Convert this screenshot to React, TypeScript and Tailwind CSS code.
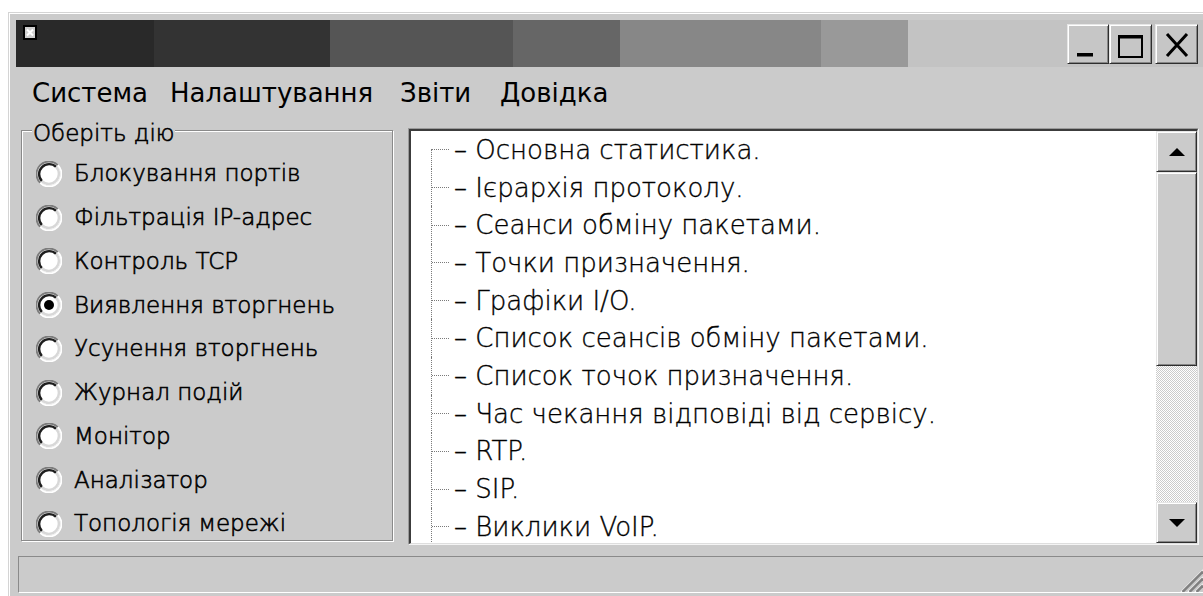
import React from 'react';

const ui = "font-['DejaVu_Sans',sans-serif] text-black";

const raised =
  'border border-t-[#e6e6e6] border-l-[#e6e6e6] border-r-[#2e2e2e] border-b-[#2e2e2e] shadow-[inset_1px_1px_0_#ffffff,inset_-1px_-1px_0_#868686]';

// thin face with a light outline, a bit heavier than the bare ExtraLight
const thinText = 'font-extralight [-webkit-text-stroke:0.6px_#000]';

const actions = [
  'Блокування портів',
  'Фільтрація IP-адрес',
  'Контроль TCP',
  'Виявлення вторгнень',
  'Усунення вторгнень',
  'Журнал подій',
  'Монітор',
  'Аналізатор',
  'Топологія мережі',
];

const reports = [
  'Основна статистика.',
  'Ієрархія протоколу.',
  'Сеанси обміну пакетами.',
  'Точки призначення.',
  'Графіки I/O.',
  'Список сеансів обміну пакетами.',
  'Список точок призначення.',
  'Час чекання відповіді від сервісу.',
  'RTP.',
  'SIP.',
  'Виклики VoIP.',
];

const WindowIcon = () => (
  <svg width="14" height="15" viewBox="0 0 14 15">
    <rect x="0" y="0" width="14" height="15" fill="#000" />
    <rect x="2" y="2" width="10" height="11" fill="#cfcfcf" />
    <path d="M4 4.5L10 10.5M10 4.5L4 10.5" stroke="#fff" strokeWidth="2" />
  </svg>
);

const CaptionButton = ({ kind, className = '' }: { kind: 'min' | 'max' | 'close'; className?: string }) => (
  <div className={`h-[40px] bg-[#c6c6c6] flex items-center justify-center ${raised} ${className}`}>
    <svg width="40" height="38" viewBox="0 0 40 38">
      {kind === 'min' && <rect x="9" y="28" width="16" height="3.5" fill="#000" />}
      {kind === 'max' && (
        <>
          <rect x="8" y="11" width="23" height="21" fill="none" stroke="#000" strokeWidth="2" />
          <rect x="7" y="10" width="25" height="3.5" fill="#000" />
        </>
      )}
      {kind === 'close' && <path d="M10 9L30 31M30 9L10 31" stroke="#000" strokeWidth="3" />}
    </svg>
  </div>
);

const Radio = ({ checked }: { checked?: boolean }) => (
  <svg width="26" height="26" viewBox="0 0 26 26" className="shrink-0">
    <circle cx="13" cy="13" r="11.5" fill="#fff" />
    <path d="M4.16 21.84A12.5 12.5 0 0 1 21.84 4.16" stroke="#7c7c7c" strokeWidth="1.8" fill="none" />
    <path d="M21.84 4.16A12.5 12.5 0 0 1 4.16 21.84" stroke="#ffffff" strokeWidth="1.8" fill="none" />
    <path d="M5.93 20.07A10 10 0 0 1 20.07 5.93" stroke="#1e1e1e" strokeWidth="2.4" fill="none" />
    <path d="M20.07 5.93A10 10 0 0 1 5.93 20.07" stroke="#d8d8d8" strokeWidth="2.4" fill="none" />
    {checked && <circle cx="13" cy="13" r="5" fill="#000" />}
  </svg>
);

const Arrow = ({ dir }: { dir: 'up' | 'down' }) => (
  <svg width="18" height="10" viewBox="0 0 18 10">
    <path d={dir === 'up' ? 'M1 9L9 1L17 9Z' : 'M1 1L9 9L17 1Z'} fill="#000" />
  </svg>
);

const SizeGrip = () => (
  <svg width="26" height="26" viewBox="0 0 26 26">
    {[0, 7, 14].map((o) => (
      <g key={o}>
        <path d={`M${4 + o} 26L26 ${4 + o}`} stroke="#ffffff" strokeWidth="1.5" />
        <path d={`M${5.5 + o} 26L26 ${5.5 + o}`} stroke="#808080" strokeWidth="2.5" />
      </g>
    ))}
  </svg>
);

export default function App() {
  return (
    <div className={`w-[1203px] h-[596px] bg-white overflow-hidden pt-[12px] pl-[8px] ${ui}`}>
      <div className="w-[1195px] h-[584px] border-t border-l border-[#d4d4d4]">
        <div className="h-full border-t border-l border-white bg-[#cbcbcb] flex flex-col">
          {/* caption */}
          <div className="flex h-[47px] ml-[6px] mt-[6px]">
            <div className="w-[138px] bg-[#292929] pt-[5px] pl-[7px]">
              <WindowIcon />
            </div>
            <div className="w-[176px] bg-[#333333]" />
            <div className="w-[183px] bg-[#555555]" />
            <div className="w-[107px] bg-[#666666]" />
            <div className="w-[201px] bg-[#878787]" />
            <div className="w-[87px] bg-[#999999]" />
            <div className="flex-1 bg-[#c3c3c3] flex items-center justify-end pr-[5px]">
              <CaptionButton kind="min" className="w-[42px]" />
              <CaptionButton kind="max" className="w-[43px]" />
              <CaptionButton kind="close" className="w-[43px] ml-[3px]" />
            </div>
          </div>

          {/* menu */}
          <div className="h-[58px] flex items-start pt-[11px] pl-[22px] text-[26px] leading-[30px]">
            <span className="w-[138px]">Система</span>
            <span className="w-[230px]">Налаштування</span>
            <span className="w-[100px]">Звіти</span>
            <span>Довідка</span>
          </div>

          {/* body */}
          <div className="h-[423px] flex items-start pl-[11px]">
            <div className="relative mt-[5px] w-[372px] h-[411px] border border-[#8a8a8a] shadow-[inset_1px_1px_0_#ffffff,1px_1px_0_#ffffff]">
              <span className={`absolute left-[10px] top-[-11px] px-[1px] bg-[#cbcbcb] text-[23px] leading-[27px] ${thinText}`}>
                Оберіть дію
              </span>
              <div className="flex flex-col pt-[21px] pl-[14px]">
                {actions.map((a, i) => (
                  <div key={a} className={`h-[43.75px] flex items-center gap-[12px] text-[23px] leading-[27px] ${thinText}`}>
                    <Radio checked={i === 3} />
                    <span>{a}</span>
                  </div>
                ))}
              </div>
            </div>

            <div className="ml-[15px] mt-[3px] w-[791px] h-[417px] border border-t-[#9a9a9a] border-l-[#9a9a9a] border-r-[#f4f4f4] border-b-[#f4f4f4]">
              <div className="h-full flex border-t-2 border-l-2 border-t-[#3c3c3c] border-l-[#3c3c3c] border-r border-b border-r-[#dedede] border-b-[#dedede] bg-white">
                <div className="flex-1 overflow-hidden text-[26px] leading-[30px] font-extralight [-webkit-text-stroke:0.35px_#000]">
                  {reports.map((r, i) => (
                    <div key={r} className="relative h-[37.7px] flex items-center">
                      <div
                        className={`absolute left-[20px] bottom-0 border-l border-dotted border-[#7a7a7a] ${
                          i === 0 ? 'top-[18px]' : 'top-0'
                        }`}
                      />
                      <div className="ml-[21px] w-[17px] border-t border-dotted border-[#7a7a7a]" />
                      <span className="ml-[5px] whitespace-nowrap">– {r}</span>
                    </div>
                  ))}
                </div>

                {/* vertical scrollbar */}
                <div className="w-[41px] flex flex-col">
                  <div className={`h-[41px] bg-[#cbcbcb] flex items-center justify-center ${raised}`}>
                    <Arrow dir="up" />
                  </div>
                  <div className={`h-[194px] bg-[#cbcbcb] ${raised}`} />
                  <div className="flex-1 bg-[repeating-conic-gradient(#ffffff_0_25%,#cbcbcb_0_50%)] bg-[length:2px_2px]" />
                  <div className={`h-[41px] bg-[#cbcbcb] flex items-center justify-center ${raised}`}>
                    <Arrow dir="down" />
                  </div>
                </div>
              </div>
            </div>
          </div>

          {/* status bar */}
          <div className="ml-[8px] mt-[8px] h-[37px] flex justify-end items-end border-t border-l border-[#8a8a8a] border-b border-b-white">
            <SizeGrip />
          </div>
        </div>
      </div>
    </div>
  );
}
